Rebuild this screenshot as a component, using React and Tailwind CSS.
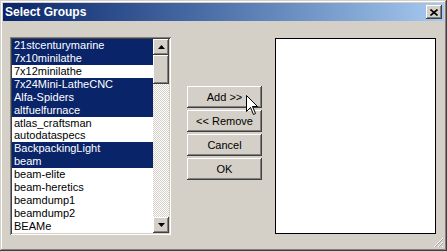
import React from "react";

const ITEMS = [
  ["21stcenturymarine", true],
  ["7x10minilathe", true],
  ["7x12minilathe", false],
  ["7x24Mini-LatheCNC", true],
  ["Alfa-Spiders", true],
  ["altfuelfurnace", true],
  ["atlas_craftsman", false],
  ["autodataspecs", false],
  ["BackpackingLight", true],
  ["beam", true],
  ["beam-elite", false],
  ["beam-heretics", false],
  ["beamdump1", false],
  ["beamdump2", false],
  ["BEAMe", false],
];

const raised =
  "shadow-[inset_-1px_-1px_#404040,inset_1px_1px_#ffffff,inset_-2px_-2px_#808080,inset_2px_2px_#d4d0c8]";

function Arrow({ up }) {
  return (
    <div className={`w-[16px] h-[16px] bg-[#d4d0c8] flex items-center justify-center ${raised}`}>
      <svg width="7" height="4" viewBox="0 0 7 4">
        {up ? <path d="M3.5 0 L7 4 L0 4 Z" fill="#000" /> : <path d="M0 0 L7 0 L3.5 4 Z" fill="#000" />}
      </svg>
    </div>
  );
}

function Btn({ children }) {
  return (
    <div className={`w-[75px] h-[22px] bg-[#d4d0c8] flex items-center justify-center text-[11px] text-black ${raised}`}>
      {children}
    </div>
  );
}

export default function App() {
  return (
    <div
      className="relative w-[447px] h-[251px] bg-[#d4d0c8] overflow-hidden shadow-[inset_-1px_-1px_#404040,inset_1px_1px_#d4d0c8,inset_-2px_-2px_#808080,inset_2px_2px_#ffffff]"
      style={{ fontFamily: '"Liberation Sans", Arial, sans-serif' }}
    >
      {/* Title bar */}
      <div className="mx-[3px] mt-[3px] h-[18px] bg-linear-to-r from-[#0a246a] to-[#a6caf0] flex items-center justify-between pl-[2px] pr-[2px]">
        <span className="text-white font-bold text-[12px] leading-none">Select Groups</span>
        <div className={`w-[16px] h-[14px] bg-[#d4d0c8] flex items-center justify-center ${raised}`}>
          <svg width="8" height="7" viewBox="0 0 8 7">
            <path d="M0.5 0.5 L7.5 6.5 M7.5 0.5 L0.5 6.5" stroke="#000" strokeWidth="1.6" />
          </svg>
        </div>
      </div>

      <div className="flex items-start pl-[10px] pt-[16px]">
        {/* Group list */}
        <div className="w-[161px] h-[198px] bg-white p-[2px] flex shadow-[inset_1px_1px_#808080,inset_-1px_-1px_#ffffff,inset_2px_2px_#404040,inset_-2px_-2px_#d4d0c8]">
          <div className="flex-1 overflow-hidden">
            {ITEMS.map(([name, sel]) => (
              <div
                key={name}
                className={`h-[12.93px] leading-[13px] text-[11px] pl-[2px] whitespace-nowrap ${sel ? "bg-[#0a246a] text-white" : "text-black"}`}
              >
                {name}
              </div>
            ))}
          </div>
          <div className="w-[16px] flex flex-col bg-[conic-gradient(#ffffff_25%,#d4d0c8_0_50%,#ffffff_0_75%,#d4d0c8_0)] bg-[length:2px_2px]">
            <Arrow up />
            <div className={`h-[29px] bg-[#d4d0c8] ${raised}`} />
            <div className="flex-1" />
            <Arrow />
          </div>
        </div>

        {/* Buttons */}
        <div className="ml-[16px] mt-[49px] flex flex-col gap-[2px]">
          <Btn>Add &gt;&gt;</Btn>
          <Btn>&lt;&lt; Remove</Btn>
          <Btn>Cancel</Btn>
          <Btn>OK</Btn>
        </div>

        {/* Selected list */}
        <div className="ml-[13px] mt-[1px] w-[161px] h-[196px] bg-white border border-black" />
      </div>

      {/* size grip */}
      <svg className="absolute right-[3px] bottom-[3px]" width="11" height="11" viewBox="0 0 11 11">
        <path d="M10 1 L1 10 M10 5 L5 10 M10 9 L9 10" stroke="#ffffff" strokeWidth="1" />
        <path d="M10 2 L2 10 M10 6 L6 10" stroke="#a0a0a0" strokeWidth="1" />
      </svg>

      {/* mouse pointer */}
      <svg className="absolute left-[246px] top-[95px]" width="13" height="21" viewBox="0 0 13 21">
        <path
          d="M0.5 0.5 L0.5 16.5 L4.5 12.5 L7.5 19.5 L9.5 18.5 L6.5 11.5 L11.5 11.5 Z"
          fill="#ffffff"
          stroke="#000000"
          strokeWidth="1"
        />
      </svg>
    </div>
  );
}
